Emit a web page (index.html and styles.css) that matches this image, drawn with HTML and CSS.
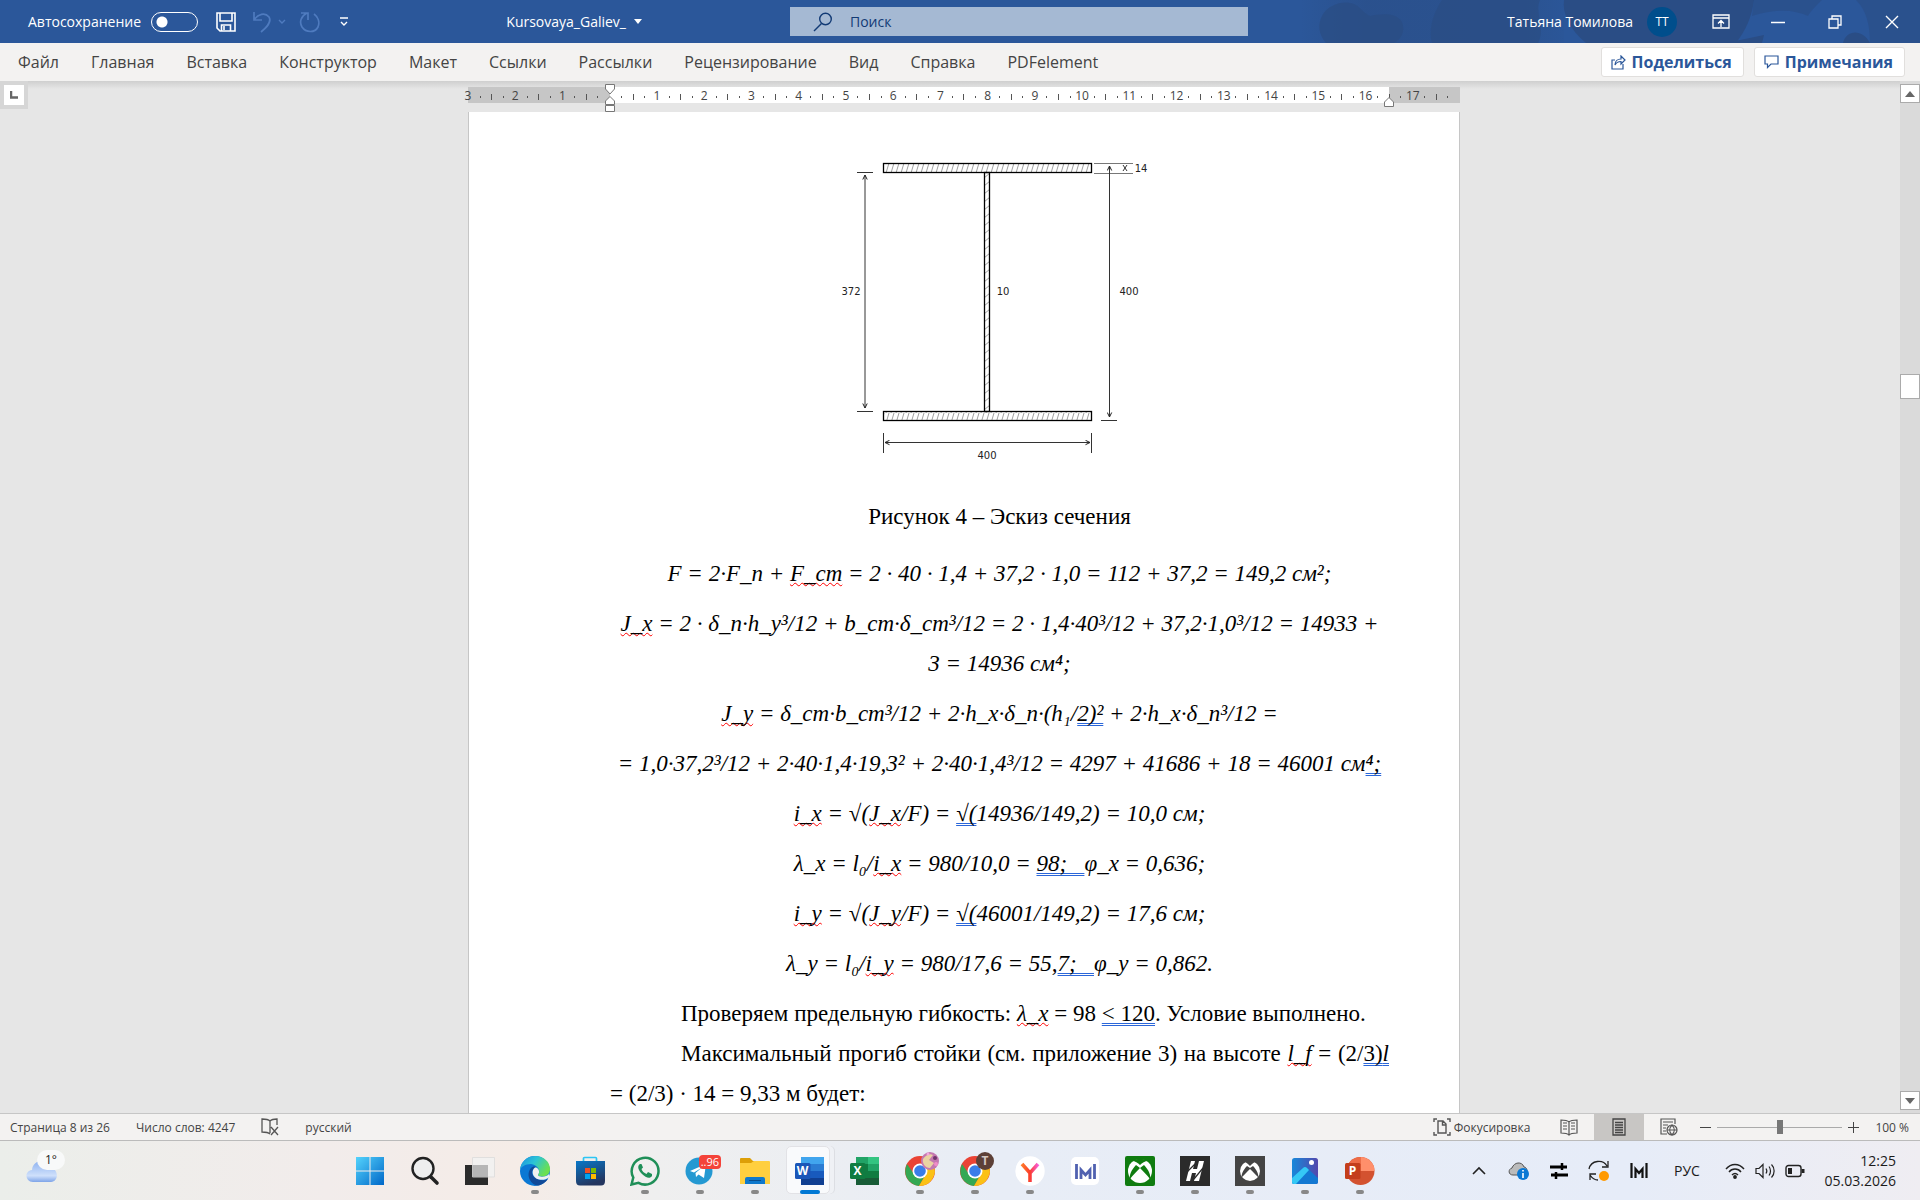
FILE: index.html
```html
<!DOCTYPE html>
<html lang="ru">
<head>
    <meta charset="UTF-8">
    <meta name="viewport" content="width=device-width, initial-scale=1.0">
    <title>Kursovaya_Galiev_ - Word</title>
    <link rel="stylesheet" href="styles.css">
</head>
<body>
    <header class="titlebar">
        <svg class="titlebar-art" width="620" height="43" viewBox="0 0 620 43" aria-hidden="true">
            <defs>
                <linearGradient id="art"><stop stop-color="#2a4d85" stop-opacity="0"/><stop offset=".25" stop-color="#2a4d85" stop-opacity=".6"/><stop offset=".8" stop-color="#2a4d85" stop-opacity=".5"/><stop offset="1" stop-color="#2a4d85" stop-opacity=".1"/></linearGradient>
            </defs>
            <path d="M0 0H264V43H0Z" fill="url(#art)"/>
            <g fill="#2a4d85">
                <path d="M22 16C28 4 44 0 54 4C62 8 64 14 70 16C80 14 96 12 102 22C106 32 100 40 94 43H26C18 34 18 24 22 16Z" opacity=".8"/>
                <path d="M142 0H240C234 12 246 28 238 43H132C128 28 134 12 142 0Z" opacity=".8"/>
                <path d="M264 0H454C452 16 446 30 436 43H286C270 30 262 14 264 0Z"/>
                <path d="M454 0H522C514 8 510 12 508 16C494 10 478 8 452 16ZM556 0H620V43H570C570 24 566 10 556 0Z" opacity=".6"/>
                <path d="M543 43C546 30 562 28 570 43ZM426 43L464 35L462 43Z"/>
            </g>
        </svg>
        <div class="title-left">
            <label class="autosave">Автосохранение <input type="checkbox" class="toggle"></label>
            <button class="qat save" aria-label="Сохранить">
                <svg width="20" height="20" viewBox="0 0 20 20" fill="none" stroke="#fff" stroke-width="1.6"><path d="M1 1H19V19H4L1 16Z"/><path d="M4 1V9H16V1M5.500 19V13H14.500V19M8 14V18"/></svg>
            </button>
            <button class="qat undo" aria-label="Отменить">
                <svg width="20" height="22" viewBox="0 0 20 22" fill="none" stroke="#4f7bbf" stroke-width="1.7"><path d="M2 1V9H10M2 9C6 3 13 1 17 6C20 11 15 16 9 21"/></svg>
            </button>
            <button class="qat more" aria-label="Список отмены">
                <svg width="8" height="6" viewBox="0 0 8 6" fill="none" stroke="#4f7bbf" stroke-width="1.400"><path d="M1 1L4 4L7 1"/></svg>
            </button>
            <button class="qat redo" aria-label="Повторить">
                <svg width="22" height="22" viewBox="0 0 22 22" fill="none" stroke="#4f7bbf" stroke-width="1.7"><path d="M2 2H9V9M8 2C2 5 0 11 3 16C7 22 16 22 19 16C21 11 19 6 15 3"/></svg>
            </button>
            <button class="qat custom" aria-label="Настройка панели быстрого доступа">
                <svg width="10" height="10" viewBox="0 0 10 10" fill="none" stroke="#fff" stroke-width="1.400"><path d="M1 1H9M2 5L5 8L8 5"/></svg>
            </button>
            <button class="doc-name">Kursovaya_Galiev_
                <svg width="8" height="5" viewBox="0 0 8 5" fill="#fff"><path d="M0 0H8L4 5Z"/></svg>
            </button>
        </div>
        <div class="search">
            <svg width="20" height="20" viewBox="0 0 20 20" fill="none" stroke="#123a75" stroke-width="1.400"><circle cx="12.500" cy="7" r="5.800"/><path d="M8.500 11.500L1 19"/></svg>
            <input type="text" placeholder="Поиск" aria-label="Поиск">
        </div>
        <div class="title-right">
            <button class="user">Татьяна Томилова <span class="avatar">ТТ</span></button>
            <button class="win" aria-label="Параметры отображения ленты">
                <svg width="18" height="16" viewBox="0 0 18 16" fill="none" stroke="#fff" stroke-width="1.300"><path d="M1 1H17V14H1ZM1 4H17M9 13V7M6 9.500L9 6.500L12 9.500"/></svg>
            </button>
            <button class="win" aria-label="Свернуть">
                <svg width="14" height="14" viewBox="0 0 14 14" stroke="#fff" stroke-width="1.500"><path d="M0 7.500H14"/></svg>
            </button>
            <button class="win" aria-label="Восстановить">
                <svg width="14" height="14" viewBox="0 0 14 14" fill="none" stroke="#fff" stroke-width="1.300"><path d="M1 4H10V13H1ZM4 4V1H13V10H10"/></svg>
            </button>
            <button class="win" aria-label="Закрыть">
                <svg width="14" height="14" viewBox="0 0 14 14" fill="none" stroke="#fff" stroke-width="1.400"><path d="M1 1L13 13M13 1L1 13"/></svg>
            </button>
        </div>
    </header>

    <nav class="tabs">
        <a href="#">Файл</a>
        <a href="#">Главная</a>
        <a href="#">Вставка</a>
        <a href="#">Конструктор</a>
        <a href="#">Макет</a>
        <a href="#">Ссылки</a>
        <a href="#">Рассылки</a>
        <a href="#">Рецензирование</a>
        <a href="#">Вид</a>
        <a href="#">Справка</a>
        <a href="#">PDFelement</a>
        <div class="tab-actions">
            <button>
                <svg width="15" height="15" viewBox="0 0 15 15" fill="none" stroke="#2b579a" stroke-width="1.200"><path d="M4 5H1V14H12V9M4 10C4 6 7 4 10 4V1L14 5L10 9V6.500C7 6.500 5 8 4 10Z"/></svg>
                Поделиться
            </button>
            <button>
                <svg width="15" height="14" viewBox="0 0 15 14" fill="none" stroke="#2b579a" stroke-width="1.200"><path d="M1 1H14V9H7L3.500 12.500V9H1Z"/></svg>
                Примечания
            </button>
        </div>
    </nav>

    <main class="workspace">
        <button class="tab-stop" aria-label="Табуляция">
            <svg width="8" height="8" viewBox="0 0 8 8"><path d="M1 0V6.500H8" fill="none" stroke="#666" stroke-width="2.500"/></svg>
        </button>
        <div class="document">
            <div class="ruler">
                <ol>
                    <li><span>3</span></li>
                    <li><span>2</span></li>
                    <li><span>1</span></li>
                    <li></li>
                    <li><span>1</span></li>
                    <li><span>2</span></li>
                    <li><span>3</span></li>
                    <li><span>4</span></li>
                    <li><span>5</span></li>
                    <li><span>6</span></li>
                    <li><span>7</span></li>
                    <li><span>8</span></li>
                    <li><span>9</span></li>
                    <li><span>10</span></li>
                    <li><span>11</span></li>
                    <li><span>12</span></li>
                    <li><span>13</span></li>
                    <li><span>14</span></li>
                    <li><span>15</span></li>
                    <li><span>16</span></li>
                    <li><span>17</span></li>
                </ol>
                <svg class="indent-left" width="12" height="28" viewBox="0 0 12 28" fill="#fff" stroke="#777"><path d="M1.500.5H10.500V5L6 10L1.500 5ZM1.500 20.500V17L6 12.500L10.500 17V20.500ZM1.500 21.500H10.500V27.500H1.500Z"/></svg>
                <svg class="indent-right" width="12" height="11" viewBox="0 0 12 11" fill="#fff" stroke="#777"><path d="M1.500 9.500V5L6 .5L10.500 5V9.500Z"/></svg>
            </div>
            <article class="sheet">
                <svg class="figure" width="360" height="340" viewBox="0 0 360 340">
                    <defs>
                        <pattern id="hatch" width="5" height="10" patternUnits="userSpaceOnUse" y="23">
                            <path d="M1 10L4 0" stroke="#777" stroke-width=".7"/>
                        </pattern>
                        <pattern id="hatchWeb" width="6" height="8" patternUnits="userSpaceOnUse" x="164">
                            <path d="M0 6L6 1" stroke="#777" stroke-width=".7"/>
                        </pattern>
                        <marker id="arrow" viewBox="0 0 6 6" refX="5.500" refY="3" markerWidth="6" markerHeight="6" orient="auto-start-reverse" markerUnits="userSpaceOnUse">
                            <path d="M1 .8L5.500 3L1 5.200" fill="none" stroke="#222"/>
                        </marker>
                    </defs>
                    <g stroke="#000" stroke-width="1.300">
                        <rect x="63.500" y="23.500" width="208" height="9" fill="url(#hatch)"/>
                        <rect x="63.500" y="271.500" width="208" height="9" fill="url(#hatch)"/>
                        <rect x="164.500" y="32.500" width="5" height="239" fill="url(#hatchWeb)"/>
                    </g>
                    <g stroke="#333" stroke-width="1" fill="none">
                        <path d="M37 32.500H53M37 271.500H53M281 23.500H297M281 280.500H297M63.500 293V313M271.500 293V313"/>
                        <path d="M274 23.500H313M274 33.500H313" stroke="#777"/>
                        <path d="M45 35V268" marker-start="url(#arrow)" marker-end="url(#arrow)"/>
                        <path d="M289.500 26V277" marker-start="url(#arrow)" marker-end="url(#arrow)"/>
                        <path d="M65 302.500H270" marker-start="url(#arrow)" marker-end="url(#arrow)"/>
                        <path d="M303 25L305 28L307 25M303 31L305 28L307 31"/>
                    </g>
                    <g class="dims">
                        <text x="31" y="155" text-anchor="middle">372</text>
                        <text x="183" y="155" text-anchor="middle">10</text>
                        <text x="309" y="155" text-anchor="middle">400</text>
                        <text x="321" y="32" text-anchor="middle">14</text>
                        <text x="167" y="319" text-anchor="middle">400</text>
                    </g>
                </svg>
                <p class="caption">Рисунок 4 – Эскиз сечения</p>
                <p class="formula">F = 2·F_п + <span class="spell">F_ст</span> = 2 · 40 · 1,4 + 37,2 · 1,0 = 112 + 37,2 = 149,2 см²;</p>
                <p class="formula"><span class="spell">J_x</span> = 2 · δ_п·h_y³/12 + b_ст·δ_ст³/12 = 2 · 1,4·40³/12 + 37,2·1,0³/12 = 14933 +<br>3 = 14936 см⁴;</p>
                <p class="formula"><span class="spell">J_y</span> = δ_ст·b_ст³/12 + 2·h_x·δ_п·(h₁/<span class="grammar">2)²</span> + 2·h_x·δ_п³/12 =</p>
                <p class="formula">= 1,0·37,2³/12 + 2·40·1,4·19,3² + 2·40·1,4³/12 = 4297 + 41686 + 18 = 46001 см<span class="grammar">⁴;</span></p>
                <p class="formula"><span class="spell">i_x</span> = √(<span class="spell">J_x</span>/F) = <span class="grammar">√(</span>14936/149,2) = 10,0 см;</p>
                <p class="formula">λ_x = l₀/<span class="spell">i_x</span> = 980/10,0 = <span class="grammar">98;&nbsp;&nbsp;&nbsp;</span>φ_x = 0,636;</p>
                <p class="formula"><span class="spell">i_y</span> = √(<span class="spell">J_y</span>/F) = <span class="grammar">√(</span>46001/149,2) = 17,6 см;</p>
                <p class="formula">λ_y = l₀/<span class="spell">i_y</span> = 980/17,6 = 55,<span class="grammar">7;&nbsp;&nbsp;&nbsp;</span>φ_y = 0,862.</p>
                <p class="text">Проверяем предельную гибкость: <em class="spell">λ_x</em> = 98 <span class="grammar">&lt; 120</span>. Условие выполнено.</p>
                <p class="text">Максимальный прогиб стойки (см. приложение 3) на высоте <em class="spell">l_f</em> = (2/<span class="grammar">3)<em>l</em></span> = (2/3) · 14 = 9,33 м будет:</p>
            </article>
        </div>
        <div class="scrollbar">
            <button aria-label="Вверх"><svg width="10" height="6" viewBox="0 0 10 6"><path d="M0 6L5 0L10 6Z" fill="#666"/></svg></button>
            <div class="track"><div class="thumb"></div></div>
            <button aria-label="Вниз"><svg width="10" height="6" viewBox="0 0 10 6"><path d="M0 0H10L5 6Z" fill="#666"/></svg></button>
        </div>
    </main>

    <footer class="statusbar">
        <span>Страница 8 из 26</span>
        <span>Число слов: 4247</span>
        <svg width="18" height="18" viewBox="0 0 18 18" fill="none" stroke="#555" stroke-width="1.300"><path d="M9 3V15M9 3C7 1 4 1 1 1V14C4 14 7 14 9 16M9 3C11 1 14 1 16 1V7M10 9L17 17M17 9L10 17"/></svg>
        <span>русский</span>
        <div class="status-right">
            <button class="focus">
                <svg width="18" height="18" viewBox="0 0 18 18" fill="none" stroke="#555" stroke-width="1.400"><path d="M4 1H1V4M14 1H17V4M4 17H1V14M14 17H17V14M5 3H10L13 6V15H5ZM9.500 3V7H13"/></svg>
                Фокусировка
            </button>
            <button class="view" aria-label="Режим чтения">
                <svg width="18" height="17" viewBox="0 0 18 17" fill="none" stroke="#555" stroke-width="1.200"><path d="M9 3V16M9 3C7 1 4 1 1 1V14C4 14 7 14 9 16C11 14 14 14 17 14V1C14 1 11 1 9 3M3 4H7M3 7H7M3 10H7M11 4H15M11 7H15M11 10H15"/></svg>
            </button>
            <button class="view active" aria-label="Разметка страницы">
                <svg width="14" height="18" viewBox="0 0 14 18" fill="none" stroke="#444" stroke-width="1.300"><path d="M1 1H13V17H1ZM3 4.500H11M3 7H11M3 9.500H11M3 12H11M3 14.500H11"/></svg>
            </button>
            <button class="view" aria-label="Веб-документ">
                <svg width="18" height="18" viewBox="0 0 18 18" fill="none" stroke="#555" stroke-width="1.200"><path d="M7 16H1V1H15V6M3 4H13M3 7H8M3 10H6M3 13H6"/><circle cx="12" cy="12" r="5"/><path d="M7 12H17M12 7C9 10 9 14 12 17C15 14 15 10 12 7"/></svg>
            </button>
            <button class="zoom-btn" aria-label="Уменьшить"><svg width="11" height="11" viewBox="0 0 11 11" stroke="#444"><path d="M0 5.500H11"/></svg></button>
            <input type="range" class="zoom" min="10" max="190" value="100" aria-label="Масштаб">
            <button class="zoom-btn" aria-label="Увеличить"><svg width="11" height="11" viewBox="0 0 11 11" stroke="#444"><path d="M0 5.500H11M5.500 0V11"/></svg></button>
            <span class="percent">100 %</span>
        </div>
    </footer>

    <div class="taskbar">
        <button class="weather" aria-label="Погода">
            <svg width="32" height="24" viewBox="0 0 32 24"><defs><linearGradient id="cloud" x2="0" y2="1"><stop stop-color="#8db2f0"/><stop offset=".7" stop-color="#cfe0fb"/><stop offset="1" stop-color="#7ea4e8"/></linearGradient></defs><path d="M7 23C-1 23-2 12 6 11C7 0 22-1 24 9C33 9 33 23 25 23Z" fill="url(#cloud)"/></svg>
            <span class="degree">1°</span>
        </button>
        <div class="apps">
            <button aria-label="Пуск">
                <svg width="30" height="30" viewBox="0 0 30 30"><defs><linearGradient id="win" x2="1" y2="1"><stop stop-color="#54d3fc"/><stop offset="1" stop-color="#0067c8"/></linearGradient></defs><path d="M1 1H14.500V14.500H1ZM15.500 1H29V14.500H15.500ZM1 15.500H14.500V29H1ZM15.500 15.500H29V29H15.500Z" fill="url(#win)"/></svg>
            </button>
            <button aria-label="Поиск">
                <svg width="30" height="30" viewBox="0 0 30 30" fill="none" stroke="#222" stroke-linecap="round"><circle cx="13" cy="12.500" r="10.500" fill="#eee" stroke-width="2.400"/><path d="M21 21L27 27" stroke-width="3.600"/></svg>
            </button>
            <button aria-label="Представление задач">
                <svg width="30" height="30" viewBox="0 0 30 30"><path d="M0 9H23V29H0Z" fill="#2b2b2b"/><path d="M7.500 1.500H29.500V21H7.500Z" fill="#f2f2f2" stroke="#ddd" opacity=".85"/><path d="M8 9H23V21H8Z" fill="#aaa" opacity=".7"/></svg>
            </button>
            <button class="running" aria-label="Edge">
                <svg width="30" height="30" viewBox="0 0 30 30"><defs><linearGradient id="edgeTop" x2="1" y2=".5"><stop stop-color="#1a8fe0"/><stop offset=".5" stop-color="#2cc4d6"/><stop offset="1" stop-color="#6be04f"/></linearGradient></defs><circle cx="15" cy="15" r="15" fill="#0b78d4"/><path d="M0 14C1 4 9 0 15 0C24 0 30 6 30 13C30 19 25 21 21 20.500C17 20 18 18 19 17C20 13 17 9 11 8C5 8 1 11 0 14Z" fill="url(#edgeTop)"/><path d="M11 12C5 19 11 30 19 29.500C23 28 26 26 28 23C22 26 13 23 12 17C12 14 14 12 16 11C14 10 12 11 11 12Z" fill="#114a98"/><path d="M15 11.500C11 14 12 22 19 23.500C23 24.500 27 23 28 22C29 22 30 20 29 18C27 20.500 23 21 20.500 20.500C17 20 18 18 19 17C19.500 14 18 11.500 15 11.500Z" fill="#eef0f0"/></svg>
            </button>
            <button aria-label="Microsoft Store">
                <svg width="30" height="30" viewBox="0 0 30 30"><defs><linearGradient id="store" x2=".4" y2="1"><stop stop-color="#0877c8"/><stop offset="1" stop-color="#24365f"/></linearGradient></defs><path d="M8.500 7V2.500Q8.500 1.500 9.500 1.500H20.500Q21.500 1.500 21.500 2.500V7" fill="none" stroke="#2cc5f4" stroke-width="1.700"/><path d="M1 5H30V25Q30 29.500 26 29.500H5Q1 29.500 1 25Z" fill="url(#store)"/><path d="M10 12H15V17H10Z" fill="#f25022"/><path d="M16 12H21V17H16Z" fill="#7fba00"/><path d="M10 18H15V23H10Z" fill="#00a4ef"/><path d="M16 18H21V23H16Z" fill="#ffb900"/></svg>
            </button>
            <button class="running" aria-label="WhatsApp">
                <svg width="30" height="30" viewBox="0 0 30 30"><path d="M1.500 28.500L3.300 21.500A13.400 13.400 0 1 1 8.500 26.800Z" fill="none" stroke="#1f8f58" stroke-width="2.500"/><path d="M10 8C7 10 8 14 12 18C16 22 20 23 22 20V18L18 16L16.500 18C14 17 12 15 11.500 13L13 11.500L11.500 8Z" fill="#1f8f58"/></svg>
            </button>
            <button class="running" aria-label="Telegram">
                <svg width="30" height="30" viewBox="0 0 30 30"><circle cx="14" cy="15" r="13.500" fill="#2499d2"/><path d="M5 15L21 8L19 22L13.500 18.500L11 21L10.500 17L17 11.500L9 16.500Z" fill="#fff"/></svg>
                <span class="badge">..96</span>
            </button>
            <button class="running" aria-label="Проводник">
                <svg width="30" height="30" viewBox="0 0 30 30"><path d="M0 3Q0 2 1 2H10L13 5H29V10H0Z" fill="#dd9f08"/><path d="M0 7H11L14 5H29Q30 5 30 6V28H0Z" fill="#ffcf3f"/><path d="M5 28V23Q5 21 7 21H23Q25 21 25 23V28Z" fill="#0f79cc"/><path d="M9 24.500H21" stroke="#0a4e8c"/></svg>
            </button>
            <button class="running current" aria-label="Word">
                <svg width="30" height="30" viewBox="0 0 30 30"><path d="M6 1H29V8H6Z" fill="#41a5ee"/><path d="M6 8H29V15H6Z" fill="#2b7cd3"/><path d="M6 15H29V22H6Z" fill="#185abd"/><path d="M6 22H29V29H6Z" fill="#103f91"/><rect y="7" width="15.500" height="16" rx="1.500" fill="#1b56b8"/><text x="7.500" y="19" class="letter">W</text></svg>
            </button>
            <button aria-label="Excel">
                <svg width="30" height="30" viewBox="0 0 30 30"><path d="M6 1H29V29H6Z" fill="#185c37"/><path d="M6 1H18V8H6ZM18 8H29V15H18Z" fill="#21a366"/><path d="M18 1H29V8H18Z" fill="#33c481"/><path d="M6 8H18V22H6ZM18 15H29V22H18Z" fill="#107c41"/><rect y="7" width="15.500" height="16" rx="1.500" fill="#107c41"/><text x="7.500" y="19" class="letter">X</text></svg>
            </button>
            <button class="running" aria-label="Chrome">
                <svg width="38" height="38" viewBox="-4 -6 38 38"><circle cx="15" cy="13" r="15" fill="#ea4335"/><path d="M2 6A15 15 0 0 0 14 28L21 16L9 16Z" fill="#34a853"/><path d="M15 6H28A15 15 0 0 1 14 28L21 16Z" fill="#fbc116"/><circle cx="15" cy="13" r="7.500" fill="#fff"/><circle cx="15" cy="13" r="5.800" fill="#3a7de8"/><circle cx="25" cy="3" r="9" fill="#c478b0"/><path d="M18 1C21-3 25-5 28-3L24 2L29 5L25 10C20 10 17 5 18 1Z" fill="#ead3a2"/><circle cx="30" cy="0" r="2" fill="#6e356c"/><circle cx="23" cy="-4" r="1.500" fill="#f3a6dd"/><circle cx="31" cy="6" r="2" fill="#f08cc8"/></svg>
            </button>
            <button class="running" aria-label="Chrome, второй профиль">
                <svg width="38" height="38" viewBox="-4 -6 38 38"><circle cx="15" cy="13" r="15" fill="#ea4335"/><path d="M2 6A15 15 0 0 0 14 28L21 16L9 16Z" fill="#34a853"/><path d="M15 6H28A15 15 0 0 1 14 28L21 16Z" fill="#fbc116"/><circle cx="15" cy="13" r="7.500" fill="#fff"/><circle cx="15" cy="13" r="5.800" fill="#3a7de8"/><circle cx="25" cy="3" r="9" fill="#5d4037"/><text x="25" y="7" class="letter profile">T</text></svg>
            </button>
            <button class="running" aria-label="Яндекс">
                <svg width="30" height="30" viewBox="0 0 30 30"><defs><linearGradient id="ya" x2="1" y2="0"><stop stop-color="#ff7a2a"/><stop offset=".5" stop-color="#fb3c2c"/><stop offset="1" stop-color="#f95ed8"/></linearGradient></defs><circle cx="15" cy="15" r="14.700" fill="#fff"/><path d="M7 8L15 17L23 8M15 16V26" fill="none" stroke="url(#ya)" stroke-width="3.600"/></svg>
            </button>
            <button aria-label="M">
                <svg width="30" height="30" viewBox="0 0 30 30"><rect x="1" y="1" width="28" height="28" rx="5" fill="#fff"/><path d="M6.500 8V23M24.500 8V23M11 23V14L15.500 19L20 14V23" fill="none" stroke="#5061b0" stroke-width="2.800"/></svg>
            </button>
            <button class="running" aria-label="Xbox">
                <svg width="30" height="30" viewBox="0 0 30 30"><rect width="30" height="30" rx="2" fill="#107c10"/><circle cx="15" cy="15" r="12" fill="#fff"/><path d="M7 5C10 5 13 7 15 9C17 7 20 5 23 5C19 2 11 2 7 5ZM11 9C6 14 4 20 5 23C8 19 12 15 15 12C18 15 22 19 25 23C26 20 24 14 19 9L15 12Z" fill="#107c10"/></svg>
            </button>
            <button class="running" aria-label="H">
                <svg width="30" height="30" viewBox="0 0 30 30"><rect width="30" height="30" fill="#2b2b2b"/><path d="M11 5H15L13 13H17L19 5H24L19 25H14L16 17H12L10 25H6Z" fill="#fff"/><path d="M7 16L15 8M14 23L23 12" stroke="#2b2b2b" stroke-width="1.200"/></svg>
            </button>
            <button class="running" aria-label="Game Bar">
                <svg width="30" height="30" viewBox="0 0 30 30"><rect width="30" height="30" fill="#444"/><circle cx="15" cy="15" r="10" fill="#fff"/><path d="M9 6C11 6 13 8 15 10C17 8 19 6 21 6C18 4 12 4 9 6ZM12 10C8 14 6 19 7 21C10 18 12 16 15 13C18 16 20 18 23 21C24 19 22 14 18 10L15 12Z" fill="#444"/></svg>
            </button>
            <button class="running" aria-label="Фотографии">
                <svg width="30" height="30" viewBox="0 0 30 30"><defs><linearGradient id="photo" x2="1"><stop stop-color="#1788da"/><stop offset="1" stop-color="#5348ad"/></linearGradient></defs><rect x="2" y="2" width="26" height="26" rx="2.500" fill="url(#photo)"/><path d="M2 22L13 12Q15 10 17 12L28 22V26Q28 28 26 28H4Q2 28 2 26Z" fill="#1378d2"/><path d="M2 22L13 12Q15 10 17 12L19 14L6 28H4Q2 28 2 26Z" fill="#35c8f5"/><circle cx="21.500" cy="6.500" r="2.500" fill="#fff"/></svg>
            </button>
            <button class="running" aria-label="PowerPoint">
                <svg width="30" height="30" viewBox="0 0 30 30"><circle cx="15.500" cy="15" r="14" fill="#d35230"/><path d="M15.500 1A14 14 0 0 1 29.500 15H15.500Z" fill="#ff8f6b"/><path d="M1.500 15A14 14 0 0 1 15.500 1V15Z" fill="#ed6c47"/><rect y="7" width="15.500" height="16" rx="1.500" fill="#c43e1c"/><text x="7.500" y="19" class="letter">P</text></svg>
            </button>
        </div>
        <div class="tray">
            <button class="tray-icon" aria-label="Скрытые значки"><svg width="14" height="9" viewBox="0 0 14 9" fill="none" stroke="#222" stroke-width="1.600"><path d="M1 8L7 2L13 8"/></svg></button>
            <button class="tray-icon" aria-label="OneDrive"><svg width="22" height="20" viewBox="0 0 22 20"><path d="M5 14C0 14 0 8 4 7C6 1 14 0 16 6C20 6 20 14 16 14Z" fill="#bbb" stroke="#555"/><circle cx="15" cy="13" r="6" fill="#0a78d4"/><path d="M15 9V10.500M15 12V17" stroke="#fff" stroke-width="1.600"/></svg></button>
            <button class="tray-icon" aria-label="Настройки"><svg width="18" height="16" viewBox="0 0 18 16" stroke="#000" stroke-width="3"><path d="M0 4H17M1 12H18"/><path d="M12 0V7M6 9V16" stroke-width="2.500"/></svg></button>
            <button class="tray-icon" aria-label="Обновление"><svg width="22" height="22" viewBox="0 0 22 22" fill="none" stroke="#222" stroke-width="1.300"><path d="M1 9C3 0 15-1 19 6M20 1V7H14M2 20V14H8M2 15C4 18 6 20 10 20"/><circle cx="16" cy="16" r="5" fill="#f90" stroke="none"/></svg></button>
            <button class="tray-icon" aria-label="M"><svg width="18" height="16" viewBox="0 0 18 16" fill="none" stroke="#111" stroke-width="2.200"><path d="M1.500 0V15M16.500 0V15M5.500 15V6L9 10L12.500 6V15"/></svg></button>
            <button class="lang">РУС</button>
            <button class="net" aria-label="Сеть, звук, батарея">
                <svg width="20" height="16" viewBox="0 0 20 16" fill="none" stroke="#222" stroke-width="1.400"><path d="M1 6C6 0 14 0 19 6M4 9C7 5 13 5 16 9M7 12C9 10 11 10 13 12"/><circle cx="10" cy="14" r="1.200" fill="#222"/></svg>
                <svg width="20" height="16" viewBox="0 0 20 16" fill="none" stroke="#222" stroke-width="1.200"><path d="M1 5.500H4L8 1.500V14.500L4 10.500H1ZM11 5.500C12 7 12 9 11 10.500M14 3.500C16 6 16 10 14 12.500M16.500 1.500C20 5 20 11 16.500 14.500"/></svg>
                <svg width="20" height="14" viewBox="0 0 20 14" fill="none" stroke="#222" stroke-width="1.400"><rect x="1" y="1.500" width="15" height="11" rx="2.500"/><path d="M3 4H7V10H3Z" fill="#222" stroke="none"/><path d="M18 5V9" stroke-width="3"/></svg>
            </button>
            <button class="clock">12:25<br>05.03.2026</button>
        </div>
    </div>
</body>
</html>
```
FILE: styles.css
```css
* {
    margin: 0;
    padding: 0;
    box-sizing: border-box;
}

body {
    display: flex;
    flex-direction: column;
    height: 100vh;
    overflow: hidden;
    font-family: "Segoe UI", "Open Sans", sans-serif;
    font-size: 16px;
    color: #444;
    background: #e6e6e6;
}

button, input {
    font: inherit;
    color: inherit;
    background: none;
    border: none;
}

svg {
    display: block;
    flex: none;
}

/* title bar */
.titlebar {
    position: relative;
    display: grid;
    grid-template-columns: 790fr 458fr 672fr;
    align-items: center;
    height: 43px;
    background: #2b579a;
    color: #fff;
    font-size: 14px;
}

.titlebar > div {
    position: relative;
}

.titlebar-art {
    position: absolute;
    right: 0;
    top: 0;
}

.title-left, .title-right, .search {
    display: flex;
    align-items: center;
}

.title-left {
    padding-left: 28px;
}

.autosave {
    display: flex;
    align-items: center;
    gap: 10px;
    margin-right: 18px;
}

.toggle {
    appearance: none;
    width: 47px;
    height: 20px;
    border: 1px solid #fff;
    border-radius: 10px;
    background: radial-gradient(circle at 10px 9px, #fff 5px, transparent 6px);
}

.undo {
    margin-left: 16px;
}

.more {
    margin-left: 6px;
}

.redo {
    margin-left: 13px;
}

.custom {
    margin-left: 18px;
}

.doc-name {
    display: flex;
    align-items: center;
    gap: 8px;
    margin-left: auto;
    margin-right: 148px;
}

.search {
    height: 29px;
    padding-left: 23px;
    gap: 17px;
    background: #a5b9d3;
    color: #123a75;
}

.search input {
    flex: 1;
    min-width: 0;
    outline: none;
}

.search input::placeholder {
    color: #123a75;
}

.title-right {
    justify-content: flex-end;
}

.user {
    display: flex;
    align-items: center;
    gap: 14px;
    margin-right: 15px;
}

.avatar {
    width: 30px;
    line-height: 30px;
    border-radius: 50%;
    background: #004e8c;
    font-size: 12px;
    text-align: center;
}

.win {
    display: flex;
    justify-content: center;
    width: 57px;
}

/* ribbon tabs */
.tabs {
    display: flex;
    align-items: center;
    gap: 32px;
    height: 38px;
    padding: 0 15px 0 18px;
    background: #f3f2f1;
}

.tabs a {
    color: #444;
    text-decoration: none;
}

.tab-actions {
    display: flex;
    gap: 10px;
    margin-left: auto;
}

.tab-actions button {
    display: flex;
    align-items: center;
    gap: 6px;
    height: 30px;
    padding: 0 11px 0 9px;
    border: 1px solid #e1dfdd;
    border-radius: 3px;
    background: #fff;
    color: #2b579a;
    font-weight: 700;
}

/* document area */
.workspace {
    display: grid;
    grid-template-columns: 28px 1fr 20px;
    flex: 1;
    min-height: 0;
    overflow: hidden;
    background: linear-gradient(#cfcfcf, #e6e6e6 8px);
}

.tab-stop {
    display: flex;
    align-items: center;
    justify-content: center;
    width: 28px;
    height: 28px;
    border: 4px solid #d6d6d6;
    background: #fff;
}

.document {
    width: 100%;
    max-width: 992px;
    margin: 0 auto;
    min-height: 0;
}

.ruler {
    position: relative;
    height: 31px;
    padding-top: 6px;
}

.ruler ol {
    display: grid;
    grid-template-columns: repeat(21, 1fr);
    height: 16px;
    list-style: none;
    background: linear-gradient(90deg, #c6c6c6 calc(100% * 3 / 21), #fff 0 calc(100% * 39 / 42), #c6c6c6 0);
    font-size: 12px;
    line-height: 17px;
}

/* quarter dots and the half-centimetre tick */
.ruler li {
    background:
        linear-gradient(#555, #555) 25% 60% / 1px 2px no-repeat,
        linear-gradient(#555, #555) 50% 60% / 1px 6px no-repeat,
        linear-gradient(#555, #555) 75% 60% / 1px 2px no-repeat;
}

.ruler span {
    display: flex;
    justify-content: center;
    width: 0;
}

.indent-left, .indent-right {
    position: absolute;
    transform: translateX(-50%);
}

.indent-left {
    left: calc(100% * 3 / 21);
    top: 3px;
}

.indent-right {
    left: calc(100% * 39 / 42);
    top: 16px;
}

.sheet {
    min-height: 100%;
    padding: 28px 70px 0 141px;
    border: 1px solid #c6c6c6;
    border-top: none;
    background: #fff;
    color: #000;
    font: 23px/40px "Times New Roman", "Liberation Serif", serif;
}

.figure {
    margin: 0 auto;
}

.dims {
    font: 10px "DejaVu Sans", sans-serif;
    fill: #222;
}

.caption {
    margin: 17px 0;
    text-align: center;
}

.formula {
    margin-bottom: 10px;
    text-align: center;
    font-style: italic;
}

.text {
    text-align: justify;
    text-indent: 71px;
}

.spell {
    text-decoration: underline wavy #f00 1px;
    text-decoration-skip-ink: none;
    text-underline-offset: 1px;
}

.grammar {
    text-decoration: underline double #2a66d9 1px;
    text-decoration-skip-ink: none;
    text-underline-offset: 2px;
}

.scrollbar {
    display: flex;
    flex-direction: column;
    padding: 3px 0;
    background: #dadada;
}

.scrollbar button {
    display: flex;
    align-items: center;
    justify-content: center;
    height: 19px;
    border: 1px solid #ababab;
    background: #fff;
}

.track {
    flex: 1;
    padding-top: 271px;
}

.thumb {
    height: 25px;
    border: 1px solid #ababab;
    background: #fff;
}

/* status bar */
.statusbar {
    display: flex;
    align-items: center;
    gap: 26px;
    height: 28px;
    padding: 0 11px 0 10px;
    border-top: 1px solid #c6c6c6;
    border-bottom: 1px solid #bbb;
    background: #f3f2f1;
    font-size: 12px;
}

.status-right {
    display: flex;
    align-items: center;
    align-self: stretch;
    margin-left: auto;
}

.focus {
    display: flex;
    align-items: center;
    gap: 3px;
    margin-right: 14px;
}

.view {
    display: flex;
    align-items: center;
    justify-content: center;
    align-self: stretch;
    width: 50px;
}

.active {
    background: #c8c6c4;
}

.zoom-btn {
    margin: 0 6px;
}

.zoom {
    appearance: none;
    width: 125px;
    height: 14px;
    background: linear-gradient(#aaa, #aaa) center / 100% 1px no-repeat;
}

.zoom::-webkit-slider-thumb {
    appearance: none;
    width: 6px;
    height: 14px;
    background: #777;
}

.percent {
    margin-left: 10px;
}

/* taskbar */
.taskbar {
    display: flex;
    height: 59px;
    color: #1b1b1b;
    background: linear-gradient(90deg, #ebeeea, #f2eceb 17%, #f5ece7 27%, #efefef 34%, #e8edf6 52%, #e6ecf8 85%, #efedf2);
}

.weather {
    position: relative;
    width: 342px;
    padding-left: 26px;
}

.degree {
    position: absolute;
    left: 37px;
    top: 9px;
    width: 28px;
    height: 20px;
    border-radius: 10px;
    background: #f8f9f9;
    font-size: 12px;
    line-height: 20px;
}

.apps {
    display: flex;
}

.apps button {
    position: relative;
    display: flex;
    align-items: center;
    justify-content: center;
    width: 55px;
}

.running::after {
    content: "";
    position: absolute;
    left: 24px;
    bottom: 6px;
    width: 8px;
    height: 4px;
    border-radius: 2px;
    background: #888;
}

.current::before {
    content: "";
    position: absolute;
    inset: 5px 7px 6px 4px;
    border: 1px solid #e2e2e6;
    border-radius: 5px;
    background: #f9fafc;
    box-shadow: 4px 0 0 #eff1f5, 5px 0 0 #dcdee3;
}

.current svg {
    position: relative;
}

.current::after {
    left: 18px;
    width: 20px;
    background: #0078d4;
}

.badge {
    position: absolute;
    right: 6px;
    top: 14px;
    padding: 0 2px;
    border-radius: 4px;
    background: #f4433a;
    color: #fff;
    font-size: 11px;
    line-height: 14px;
}

.letter {
    font: 700 12px "Open Sans", sans-serif;
    fill: #fff;
    text-anchor: middle;
}

.profile {
    fill: #d4c7c2;
}

.tray {
    display: flex;
    align-items: center;
    margin-left: auto;
    padding-right: 24px;
    font-size: 14px;
}

.tray-icon {
    display: flex;
    justify-content: center;
    width: 40px;
}

.lang {
    width: 56px;
}

.net {
    display: flex;
    align-items: center;
    gap: 10px;
    margin-left: 10px;
}

.clock {
    width: 91px;
    line-height: 20px;
    text-align: right;
}
```
